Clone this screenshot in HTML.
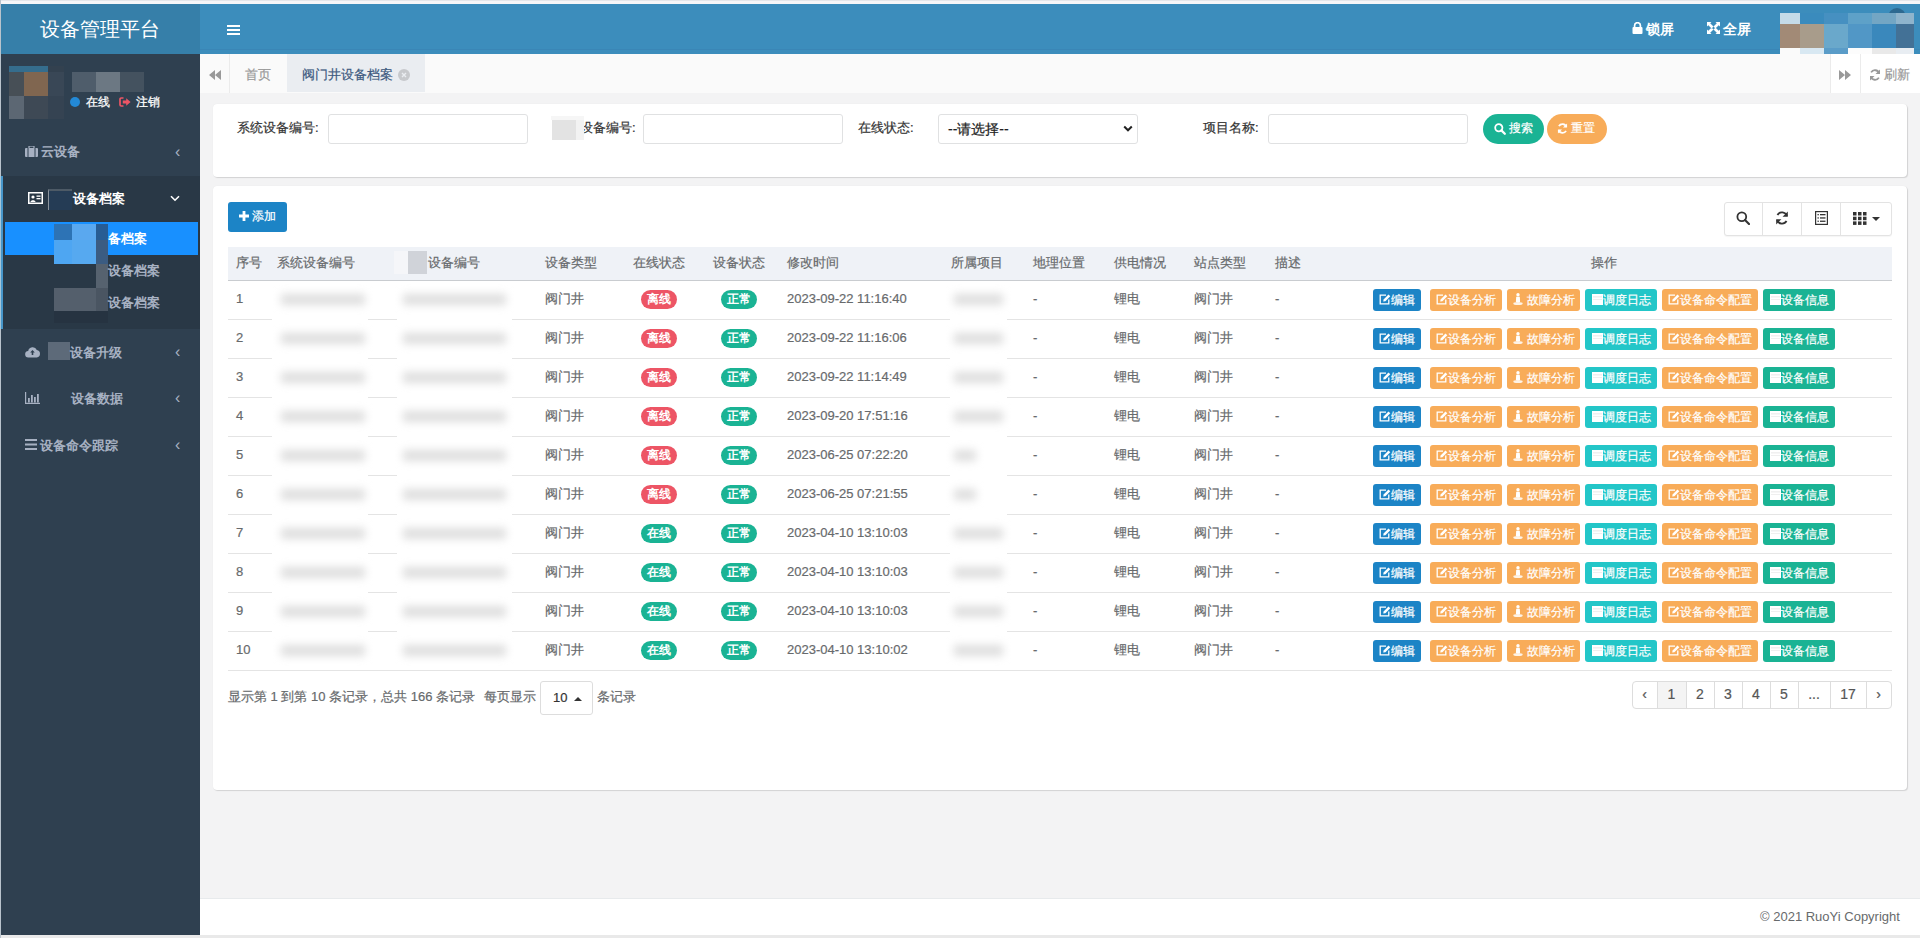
<!DOCTYPE html>
<html><head><meta charset="utf-8">
<style>
*{box-sizing:border-box;margin:0;padding:0}
.td,.th,.lbl,.tbt,.btt,.bt,.pg{-webkit-text-stroke:0.2px currentColor}
html,body{width:1920px;height:938px;overflow:hidden;background:#ececec;font-family:"Liberation Sans",sans-serif;font-size:13px;color:#676a6c}
.abs{position:absolute}
#topstrip{left:0;top:0;width:1920px;height:4px;background:#f6f6f8;border-top:1px solid #e4e6ea}
#logo{left:0;top:4px;width:200px;height:50px;background:#367fa9;color:#fff;font-size:20px;line-height:50px;text-align:center}
#navbar{left:200px;top:4px;width:1720px;height:50px;background:#3c8dbc}
#sidebar{left:0;top:54px;width:200px;height:881px;background:#2f4050}
#leftline{left:0;top:0;width:1px;height:938px;background:#b9c3cc}
#tabs{left:200px;top:54px;width:1720px;height:40px;background:#fafafa;border-bottom:1px solid #dcdcdc}
#main{left:200px;top:93px;width:1720px;height:806px;background:#f3f3f4}
#footer{left:200px;top:898px;width:1720px;height:37px;background:#fff;border-top:1px solid #e7eaec}
#bottomstrip{left:0;top:935px;width:1920px;height:3px;background:#e9e9e9}
.panel{background:#fff;border-radius:4px;box-shadow:1px 1px 1px rgba(0,0,0,.13),0 0 1px rgba(0,0,0,.08)}

.sbm{font-size:13px;font-weight:bold;color:#a7b1c2;line-height:16px;white-space:nowrap}
.sbt{line-height:16px;white-space:nowrap;-webkit-text-stroke:0.25px currentColor}
.chev{font-size:16px;color:#a7b1c2;line-height:16px}

.nvt{font-size:14px;font-weight:bold;color:#fff;line-height:16px;white-space:nowrap}
.tbt{font-size:13px;line-height:16px;white-space:nowrap}

.lbl{font-size:13px;color:#333;line-height:16px;white-space:nowrap}
.inp{background:#fff;border:1px solid #e0e1e2;border-radius:3px}
.btt{font-size:12px;color:#fff;line-height:15px;white-space:nowrap}

.th{font-size:13px;color:#676a6c;line-height:16px;white-space:nowrap}
.td{font-size:13px;color:#676a6c;line-height:16px;white-space:nowrap}
.badge{width:36px;height:19px;border-radius:10px;color:#fff;font-size:12px;font-weight:bold;line-height:19px;text-align:center}
.bt{height:22px;border-radius:3px;color:#fff;font-size:12px;line-height:22px;text-align:center;white-space:nowrap}
.blur{background:#dedede;filter:blur(4px)}
.pg{font-size:14px;color:#555;line-height:16px;text-align:center}
</style></head><body>
<div id="topstrip" class="abs"></div>
<div id="logo" class="abs">设备管理平台</div>
<div id="navbar" class="abs"></div>

<!-- NAVBAR -->
<div class="abs" style="left:200px;top:49px;width:1720px;height:1px;background:#3a86b6"></div>
<div class="abs" style="left:227px;top:25px;width:13px;height:2px;background:#fff"></div>
<div class="abs" style="left:227px;top:29px;width:13px;height:2px;background:#fff"></div>
<div class="abs" style="left:227px;top:33px;width:13px;height:2px;background:#fff"></div>
<svg class="abs" style="left:1632px;top:22px" width="11" height="12" viewBox="0 0 11 12"><path d="M2.6 5V3.6a2.9 2.9 0 0 1 5.8 0V5" fill="none" stroke="#fff" stroke-width="1.7"/><rect x="0.5" y="5" width="10" height="7" rx="1" fill="#fff"/></svg>
<div class="abs nvt" style="left:1646px;top:21px">锁屏</div>
<svg class="abs" style="left:1707px;top:22px" width="13" height="12" viewBox="0 0 13 12"><path d="M0 0h4.5L3.2 1.3 6.5 4.6 4.6 6.5 1.3 3.2 0 4.5zM13 0v4.5L11.7 3.2 8.4 6.5 6.5 4.6 9.8 1.3 8.5 0zM0 12V7.5l1.3 1.3 3.3-3.3 1.9 1.9-3.3 3.3L4.5 12zM13 12H8.5l1.3-1.3-3.3-3.3 1.9-1.9 3.3 3.3L13 7.5z" fill="#fff"/></svg>
<div class="abs nvt" style="left:1723px;top:21px">全屏</div>
<div class="abs" style="left:1888px;top:8px;width:18px;height:10px;border-radius:9px 9px 0 0;background:#2d6990"></div>
<div class="abs" style="left:1780px;top:13px;width:20px;height:11px;background:#c5dbe8"></div>
<div class="abs" style="left:1800px;top:13px;width:24px;height:11px;background:#3a8bbd"></div>
<div class="abs" style="left:1824px;top:13px;width:24px;height:11px;background:#4690c1"></div>
<div class="abs" style="left:1848px;top:13px;width:24px;height:11px;background:#5ea1c8"></div>
<div class="abs" style="left:1872px;top:13px;width:24px;height:11px;background:#73a6c4"></div>
<div class="abs" style="left:1896px;top:13px;width:18px;height:11px;background:#8fb4cc"></div>
<div class="abs" style="left:1780px;top:24px;width:20px;height:24px;background:#a28a76"></div>
<div class="abs" style="left:1800px;top:24px;width:24px;height:24px;background:#a89c8b"></div>
<div class="abs" style="left:1824px;top:24px;width:24px;height:24px;background:#6aa8cb"></div>
<div class="abs" style="left:1848px;top:24px;width:24px;height:24px;background:#5197c6"></div>
<div class="abs" style="left:1872px;top:24px;width:24px;height:24px;background:#3a88bc"></div>
<div class="abs" style="left:1896px;top:24px;width:18px;height:24px;background:#437196"></div>
<div class="abs" style="left:1780px;top:48px;width:20px;height:8px;background:#fafafa"></div>
<div class="abs" style="left:1800px;top:48px;width:24px;height:8px;background:#d8e8f2"></div>
<div class="abs" style="left:1824px;top:48px;width:24px;height:8px;background:#5a9cc8"></div>
<div class="abs" style="left:1848px;top:48px;width:24px;height:8px;background:#fcfcfc"></div>
<div class="abs" style="left:1872px;top:48px;width:24px;height:8px;background:#e9e9e9"></div>
<div class="abs" style="left:1896px;top:48px;width:18px;height:8px;background:#e8edf2"></div>

<div id="sidebar" class="abs"></div>

<!-- SIDEBAR -->
<div class="abs" style="left:9px;top:66px;width:39px;height:6px;background:#356d8d"></div>
<div class="abs" style="left:48px;top:66px;width:16px;height:6px;background:#33414f"></div>
<div class="abs" style="left:9px;top:72px;width:15px;height:24px;background:#474f56"></div>
<div class="abs" style="left:24px;top:72px;width:24px;height:24px;background:#806650"></div>
<div class="abs" style="left:48px;top:72px;width:16px;height:24px;background:#394756"></div>
<div class="abs" style="left:9px;top:96px;width:15px;height:23px;background:#5c6773"></div>
<div class="abs" style="left:24px;top:96px;width:24px;height:23px;background:#3e4955"></div>
<div class="abs" style="left:48px;top:96px;width:16px;height:23px;background:#354352"></div>
<div class="abs" style="left:72px;top:72px;width:24px;height:20px;background:#4f5d6b"></div>
<div class="abs" style="left:96px;top:72px;width:24px;height:20px;background:#6c7883"></div>
<div class="abs" style="left:120px;top:72px;width:24px;height:20px;background:#44525f"></div>
<div class="abs" style="left:70px;top:97px;width:10px;height:10px;border-radius:50%;background:#2389d6"></div>
<div class="abs sbt" style="left:86px;top:94px;color:#fff;font-size:12px">在线</div>
<svg class="abs" style="left:119px;top:97px" width="12" height="10" viewBox="0 0 12 10"><path d="M4.5 1H2.2Q1 1 1 2.2v5.6Q1 9 2.2 9h2.3" fill="none" stroke="#ed5565" stroke-width="1.7"/><path d="M3.8 3.6h3.4V1.2L11.6 5 7.2 8.8V6.4H3.8z" fill="#ed5565"/></svg>
<div class="abs sbt" style="left:136px;top:94px;color:#fff;font-size:12px">注销</div>

<!-- menu item 云设备 -->
<svg class="abs" style="left:25px;top:146px" width="13" height="11" viewBox="0 0 13 11"><rect x="0" y="2" width="13" height="9" rx="1" fill="#a7b1c2"/><rect x="4" y="0" width="5" height="3" fill="none" stroke="#a7b1c2" stroke-width="1.2"/><rect x="2.5" y="2" width="1" height="9" fill="#2f4050"/><rect x="9.5" y="2" width="1" height="9" fill="#2f4050"/></svg>
<div class="abs sbm" style="left:41px;top:144px">云设备</div>
<div class="abs chev" style="left:175px;top:144px">&lsaquo;</div>

<!-- active section -->
<div class="abs" style="left:0;top:176px;width:200px;height:153px;background:#293846"></div>
<div class="abs" style="left:0;top:176px;width:3px;height:153px;background:#4796c9"></div>
<svg class="abs" style="left:28px;top:192px" width="15" height="12" viewBox="0 0 15 12"><rect x="0.75" y="0.75" width="13.5" height="10.5" fill="none" stroke="#fff" stroke-width="1.5"/><circle cx="5" cy="5" r="1.6" fill="#fff"/><path d="M2.5 10c0-2.5 5-2.5 5 0z" fill="#fff"/><rect x="8.5" y="3.5" width="4" height="1.3" fill="#fff"/><rect x="8.5" y="6" width="4" height="1.3" fill="#fff"/></svg>
<div class="abs" style="left:48px;top:189px;width:24px;height:21px;background:#253c55;border-left:1px solid #8a939c;border-top:2px solid #4d5a66"></div>
<div class="abs sbm" style="left:73px;top:191px;color:#fff">设备档案</div>
<svg class="abs" style="left:170px;top:195px" width="10" height="7" viewBox="0 0 10 7"><path d="M1 1.2l4 4 4-4" fill="none" stroke="#fff" stroke-width="1.6"/></svg>

<div class="abs" style="left:5px;top:222px;width:193px;height:33px;background:#1890ff"></div>
<div class="abs" style="left:54px;top:224px;width:18px;height:16px;background:#2d73b5"></div>
<div class="abs" style="left:72px;top:224px;width:24px;height:16px;background:#5aa8ef"></div>
<div class="abs" style="left:96px;top:224px;width:12px;height:16px;background:#275c94"></div>
<div class="abs" style="left:54px;top:240px;width:18px;height:24px;background:#4ea6f2"></div>
<div class="abs" style="left:72px;top:240px;width:24px;height:24px;background:#56a9f0"></div>
<div class="abs" style="left:96px;top:240px;width:12px;height:24px;background:#3b5c82"></div>
<div class="abs" style="left:96px;top:264px;width:12px;height:24px;background:#56626f"></div>
<div class="abs" style="left:54px;top:288px;width:42px;height:23px;background:#545f6c"></div>
<div class="abs" style="left:96px;top:288px;width:12px;height:23px;background:#4a5562"></div>
<div class="abs" style="left:54px;top:311px;width:54px;height:12px;background:#263341"></div>
<div class="abs sbm" style="left:108px;top:231px;color:#fff">备档案</div>
<div class="abs sbm" style="left:108px;top:263px">设备档案</div>
<div class="abs sbm" style="left:108px;top:295px">设备档案</div>

<!-- 设备升级 -->
<svg class="abs" style="left:25px;top:346px" width="15" height="12" viewBox="0 0 15 12"><path d="M3.5 11.5a3.2 3.2 0 0 1-.3-6.4A4.5 4.5 0 0 1 11.8 4a3.8 3.8 0 0 1 0 7.5z" fill="#a7b1c2"/><path d="M7.5 4l-2.3 2.5h1.5V9h1.6V6.5h1.5z" fill="#2f4050"/></svg>
<div class="abs" style="left:48px;top:342px;width:22px;height:18px;background:#5d6a79"></div>
<div class="abs sbm" style="left:70px;top:345px">设备升级</div>
<div class="abs chev" style="left:175px;top:344px">&lsaquo;</div>

<!-- 设备数据 -->
<svg class="abs" style="left:25px;top:392px" width="15" height="12" viewBox="0 0 15 12"><path d="M0.6 0v11.4H15" fill="none" stroke="#a7b1c2" stroke-width="1.2"/><rect x="3" y="6" width="1.8" height="4.5" fill="#a7b1c2"/><rect x="6" y="3" width="1.8" height="7.5" fill="#a7b1c2"/><rect x="9" y="5" width="1.8" height="5.5" fill="#a7b1c2"/><rect x="12" y="2" width="1.8" height="8.5" fill="#a7b1c2"/></svg>
<div class="abs sbm" style="left:71px;top:391px">设备数据</div>
<div class="abs chev" style="left:175px;top:390px">&lsaquo;</div>

<!-- 设备命令跟踪 -->
<svg class="abs" style="left:25px;top:439px" width="12" height="11" viewBox="0 0 12 11"><rect y="0" width="12" height="2" fill="#a7b1c2"/><rect y="4.5" width="12" height="2" fill="#a7b1c2"/><rect y="9" width="12" height="2" fill="#a7b1c2"/></svg>
<div class="abs sbm" style="left:40px;top:438px">设备命令跟踪</div>
<div class="abs chev" style="left:175px;top:437px">&lsaquo;</div>

<div id="tabs" class="abs"></div>
<!-- TABS -->
<div class="abs" style="left:229px;top:54px;width:1px;height:39px;background:#ebebeb"></div>
<svg class="abs" style="left:209px;top:70px" width="12" height="10" viewBox="0 0 12 10"><path d="M6 0v10L0 5zM12 0v10L6 5z" fill="#999"/></svg>
<div class="abs tbt" style="left:245px;top:67px;color:#999">首页</div>
<div class="abs" style="left:287px;top:54px;width:138px;height:38px;background:#eaedf1"></div>
<div class="abs tbt" style="left:302px;top:67px;color:#3d5a80">阀门井设备档案</div>
<div class="abs" style="left:398px;top:69px;width:12px;height:12px;border-radius:50%;background:#c7c9cc"></div>
<svg class="abs" style="left:398px;top:69px" width="12" height="12" viewBox="0 0 12 12"><path d="M4 4l4 4M8 4l-4 4" stroke="#eaedf1" stroke-width="1.4"/></svg>
<div class="abs" style="left:1830px;top:54px;width:1px;height:39px;background:#ebebeb"></div>
<div class="abs" style="left:1860px;top:54px;width:1px;height:39px;background:#ebebeb"></div>
<div class="abs" style="left:1831px;top:54px;width:29px;height:39px;background:#fff"></div>
<div class="abs" style="left:1861px;top:54px;width:59px;height:39px;background:#fff"></div>
<svg class="abs" style="left:1839px;top:70px" width="12" height="10" viewBox="0 0 12 10"><path d="M0 0v10L6 5zM6 0v10L12 5z" fill="#999"/></svg>
<svg class="abs" style="left:1869px;top:69px" width="12" height="12" viewBox="0 0 12 12"><path d="M10.2 4.2A4.5 4.5 0 0 0 2.1 3.4" fill="none" stroke="#999" stroke-width="1.8"/><path d="M11 0.5v4.5H6.5z" fill="#999"/><path d="M1.8 7.8a4.5 4.5 0 0 0 8.1.8" fill="none" stroke="#999" stroke-width="1.8"/><path d="M1 11.5V7h4.5z" fill="#999"/></svg>
<div class="abs tbt" style="left:1884px;top:67px;color:#999">刷新</div>

<div id="main" class="abs"></div>
<div id="footer" class="abs"></div>
<div id="bottomstrip" class="abs"></div>
<div id="leftline" class="abs"></div>
<div class="abs" style="left:0;top:176px;width:1px;height:153px;background:#a5c5d8"></div>
<div class="abs panel" style="left:213px;top:104px;width:1694px;height:73px"></div>
<div class="abs panel" style="left:213px;top:186px;width:1694px;height:604px"></div>

<!-- SEARCH FORM -->
<div class="abs lbl" style="left:237px;top:120px">系统设备编号:</div>
<div class="abs inp" style="left:328px;top:114px;width:200px;height:30px"></div>
<div class="abs lbl" style="left:580px;top:120px">设备编号:</div>
<div class="abs" style="left:551px;top:116px;width:33px;height:4px;background:#f6f6f6"></div>
<div class="abs" style="left:552px;top:120px;width:24px;height:20px;background:#e3e3e3"></div>
<div class="abs" style="left:576px;top:120px;width:8px;height:20px;background:#f2f2f2"></div>
<div class="abs inp" style="left:643px;top:114px;width:200px;height:30px"></div>
<div class="abs lbl" style="left:858px;top:120px">在线状态:</div>
<div class="abs inp" style="left:938px;top:114px;width:200px;height:30px"></div>
<div class="abs lbl" style="left:948px;top:121px;color:#222;font-size:14px">--请选择--</div>
<svg class="abs" style="left:1123px;top:125px" width="10" height="8" viewBox="0 0 10 8"><path d="M1.2 1.5l3.8 3.8 3.8-3.8" fill="none" stroke="#222" stroke-width="2"/></svg>
<div class="abs lbl" style="left:1203px;top:120px">项目名称:</div>
<div class="abs inp" style="left:1268px;top:114px;width:200px;height:30px"></div>
<div class="abs" style="left:1483px;top:114px;width:61px;height:30px;border-radius:15px;background:#1ab394"></div>
<svg class="abs" style="left:1494px;top:123px" width="12" height="12" viewBox="0 0 12 12"><circle cx="4.8" cy="4.8" r="3.6" fill="none" stroke="#fff" stroke-width="1.8"/><path d="M7.4 7.4l3.4 3.4" stroke="#fff" stroke-width="2.2" stroke-linecap="round"/></svg>
<div class="abs btt" style="left:1509px;top:121px">搜索</div>
<div class="abs" style="left:1547px;top:114px;width:60px;height:30px;border-radius:15px;background:#f8ac59"></div>
<svg class="abs" style="left:1557px;top:123px" width="11" height="11" viewBox="0 0 12 12"><path d="M10.2 4.2A4.5 4.5 0 0 0 2.1 3.4" fill="none" stroke="#fff" stroke-width="2"/><path d="M11 0.5v4.5H6.5z" fill="#fff"/><path d="M1.8 7.8a4.5 4.5 0 0 0 8.1.8" fill="none" stroke="#fff" stroke-width="2"/><path d="M1 11.5V7h4.5z" fill="#fff"/></svg>
<div class="abs btt" style="left:1571px;top:121px">重置</div>

<!-- TABLE -->
<div class="abs" style="left:228px;top:202px;width:59px;height:30px;border-radius:3px;background:#1c84c6"></div>
<svg class="abs" style="left:239px;top:211px" width="10" height="10" viewBox="0 0 10 10"><path d="M3.6 0h2.8v3.6H10v2.8H6.4V10H3.6V6.4H0V3.6h3.6z" fill="#fff"/></svg>
<div class="abs btt" style="left:252px;top:209px">添加</div>
<div class="abs" style="left:1724px;top:202px;width:168px;height:34px;border:1px solid #e3e3e3;border-radius:3px;background:#fff;box-shadow:0 1px 1px rgba(0,0,0,.04)"></div>
<div class="abs" style="left:1762px;top:203px;width:1px;height:32px;background:#e3e3e3"></div>
<div class="abs" style="left:1801px;top:203px;width:1px;height:32px;background:#e3e3e3"></div>
<div class="abs" style="left:1840px;top:203px;width:1px;height:32px;background:#e3e3e3"></div>
<svg class="abs" style="left:1736px;top:211px" width="14" height="14" viewBox="0 0 14 14"><circle cx="5.8" cy="5.8" r="4.4" fill="none" stroke="#333" stroke-width="1.8"/><path d="M9 9l4 4" stroke="#333" stroke-width="2.2" stroke-linecap="round"/></svg>
<svg class="abs" style="left:1775px;top:211px" width="14" height="14" viewBox="0 0 12 12"><path d="M10.2 4.2A4.5 4.5 0 0 0 2.1 3.4" fill="none" stroke="#333" stroke-width="1.6"/><path d="M11 0.5v4.5H6.5z" fill="#333"/><path d="M1.8 7.8a4.5 4.5 0 0 0 8.1.8" fill="none" stroke="#333" stroke-width="1.6"/><path d="M1 11.5V7h4.5z" fill="#333"/></svg>
<svg class="abs" style="left:1815px;top:211px" width="13" height="14" viewBox="0 0 13 14"><rect x="0.6" y="0.6" width="11.8" height="12.8" fill="none" stroke="#333" stroke-width="1.2"/><rect x="2.5" y="3" width="1.3" height="1.3" fill="#333"/><rect x="5" y="3" width="5.5" height="1.3" fill="#333"/><rect x="2.5" y="6.3" width="1.3" height="1.3" fill="#333"/><rect x="5" y="6.3" width="5.5" height="1.3" fill="#333"/><rect x="2.5" y="9.6" width="1.3" height="1.3" fill="#333"/><rect x="5" y="9.6" width="5.5" height="1.3" fill="#333"/></svg>
<svg class="abs" style="left:1853px;top:212px" width="27" height="13" viewBox="0 0 27 13"><g fill="#333"><rect x="0" y="0" width="3.5" height="3.5"/><rect x="5" y="0" width="3.5" height="3.5"/><rect x="10" y="0" width="3.5" height="3.5"/><rect x="0" y="4.7" width="3.5" height="3.5"/><rect x="5" y="4.7" width="3.5" height="3.5"/><rect x="10" y="4.7" width="3.5" height="3.5"/><rect x="0" y="9.4" width="3.5" height="3.5"/><rect x="5" y="9.4" width="3.5" height="3.5"/><rect x="10" y="9.4" width="3.5" height="3.5"/><path d="M19 5h8l-4 4z"/></g></svg>
<div class="abs" style="left:228px;top:247px;width:1664px;height:33px;background:#eff2f7"></div>
<div class="abs" style="left:228px;top:280px;width:1664px;height:1px;background:#c9ccd0"></div>
<div class="abs th" style="left:236px;top:255px">序号</div>
<div class="abs th" style="left:277px;top:255px">系统设备编号</div>
<div class="abs th" style="left:428px;top:255px">设备编号</div>
<div class="abs th" style="left:545px;top:255px">设备类型</div>
<div class="abs th" style="left:633px;top:255px">在线状态</div>
<div class="abs th" style="left:713px;top:255px">设备状态</div>
<div class="abs th" style="left:787px;top:255px">修改时间</div>
<div class="abs th" style="left:951px;top:255px">所属项目</div>
<div class="abs th" style="left:1033px;top:255px">地理位置</div>
<div class="abs th" style="left:1114px;top:255px">供电情况</div>
<div class="abs th" style="left:1194px;top:255px">站点类型</div>
<div class="abs th" style="left:1275px;top:255px">描述</div>
<div class="abs th" style="left:1591px;top:255px">操作</div>
<div class="abs" style="left:394px;top:251px;width:14px;height:23px;background:#f5f6f9"></div>
<div class="abs" style="left:408px;top:251px;width:19px;height:23px;background:#d0d3d9"></div>
<div class="abs" style="left:228px;top:319px;width:1664px;height:1px;background:#e4e4e4"></div>
<div class="abs td" style="left:236px;top:291px">1</div>
<div class="abs td" style="left:545px;top:291px">阀门井</div>
<div class="abs badge" style="left:641px;top:290px;background:#ed5565">离线</div>
<div class="abs badge" style="left:721px;top:290px;background:#1ab394">正常</div>
<div class="abs td" style="left:787px;top:291px">2023-09-22 11:16:40</div>
<div class="abs td" style="left:1033px;top:291px">-</div>
<div class="abs td" style="left:1114px;top:291px">锂电</div>
<div class="abs td" style="left:1194px;top:291px">阀门井</div>
<div class="abs td" style="left:1275px;top:291px">-</div>
<div class="abs bt" style="left:1373px;top:289px;width:48px;background:#1c84c6"><svg width="12" height="11" viewBox="0 0 12 11" style="vertical-align:-1px"><path d="M7 1.2H1.2v8.6h8.6V5.5" fill="none" stroke="#fff" stroke-width="1.3"/><path d="M4.2 7.6l.4-2.2L9.5.5l1.8 1.8-4.9 4.9z" fill="#fff"/></svg>编辑</div>
<div class="abs bt" style="left:1430px;top:289px;width:72px;background:#f8ac59"><svg width="12" height="11" viewBox="0 0 12 11" style="vertical-align:-1px"><path d="M7 1.2H1.2v8.6h8.6V5.5" fill="none" stroke="#fff" stroke-width="1.3"/><path d="M4.2 7.6l.4-2.2L9.5.5l1.8 1.8-4.9 4.9z" fill="#fff"/></svg>设备分析</div>
<div class="abs bt" style="left:1507px;top:289px;width:73px;background:#f8ac59"><svg width="10" height="12" viewBox="0 0 10 12" style="vertical-align:-1px;margin-right:4px"><circle cx="5" cy="1.8" r="1.7" fill="#fff"/><path d="M3.2 3.8h3.6l.3 5.5H2.9z" fill="#fff"/><ellipse cx="5" cy="10.4" rx="4.7" ry="1.5" fill="#fff" opacity=".85"/></svg>故障分析</div>
<div class="abs bt" style="left:1585px;top:289px;width:72px;background:#23c6c8"><svg width="11" height="11" viewBox="0 0 11 11" style="vertical-align:-1px"><rect width="11" height="11" fill="#fff"/><rect x="1" y="2.5" width="9" height=".8" fill="rgba(0,0,0,.12)"/><rect x="1" y="5" width="9" height=".8" fill="rgba(0,0,0,.08)"/></svg>调度日志</div>
<div class="abs bt" style="left:1662px;top:289px;width:96px;background:#f8ac59"><svg width="12" height="11" viewBox="0 0 12 11" style="vertical-align:-1px"><path d="M7 1.2H1.2v8.6h8.6V5.5" fill="none" stroke="#fff" stroke-width="1.3"/><path d="M4.2 7.6l.4-2.2L9.5.5l1.8 1.8-4.9 4.9z" fill="#fff"/></svg>设备命令配置</div>
<div class="abs bt" style="left:1763px;top:289px;width:72px;background:#1ab394"><svg width="11" height="11" viewBox="0 0 11 11" style="vertical-align:-1px"><rect width="11" height="11" fill="#fff"/><rect x="1" y="2.5" width="9" height=".8" fill="rgba(0,0,0,.12)"/><rect x="1" y="5" width="9" height=".8" fill="rgba(0,0,0,.08)"/></svg>设备信息</div>
<div class="abs" style="left:228px;top:358px;width:1664px;height:1px;background:#e4e4e4"></div>
<div class="abs td" style="left:236px;top:330px">2</div>
<div class="abs td" style="left:545px;top:330px">阀门井</div>
<div class="abs badge" style="left:641px;top:329px;background:#ed5565">离线</div>
<div class="abs badge" style="left:721px;top:329px;background:#1ab394">正常</div>
<div class="abs td" style="left:787px;top:330px">2023-09-22 11:16:06</div>
<div class="abs td" style="left:1033px;top:330px">-</div>
<div class="abs td" style="left:1114px;top:330px">锂电</div>
<div class="abs td" style="left:1194px;top:330px">阀门井</div>
<div class="abs td" style="left:1275px;top:330px">-</div>
<div class="abs bt" style="left:1373px;top:328px;width:48px;background:#1c84c6"><svg width="12" height="11" viewBox="0 0 12 11" style="vertical-align:-1px"><path d="M7 1.2H1.2v8.6h8.6V5.5" fill="none" stroke="#fff" stroke-width="1.3"/><path d="M4.2 7.6l.4-2.2L9.5.5l1.8 1.8-4.9 4.9z" fill="#fff"/></svg>编辑</div>
<div class="abs bt" style="left:1430px;top:328px;width:72px;background:#f8ac59"><svg width="12" height="11" viewBox="0 0 12 11" style="vertical-align:-1px"><path d="M7 1.2H1.2v8.6h8.6V5.5" fill="none" stroke="#fff" stroke-width="1.3"/><path d="M4.2 7.6l.4-2.2L9.5.5l1.8 1.8-4.9 4.9z" fill="#fff"/></svg>设备分析</div>
<div class="abs bt" style="left:1507px;top:328px;width:73px;background:#f8ac59"><svg width="10" height="12" viewBox="0 0 10 12" style="vertical-align:-1px;margin-right:4px"><circle cx="5" cy="1.8" r="1.7" fill="#fff"/><path d="M3.2 3.8h3.6l.3 5.5H2.9z" fill="#fff"/><ellipse cx="5" cy="10.4" rx="4.7" ry="1.5" fill="#fff" opacity=".85"/></svg>故障分析</div>
<div class="abs bt" style="left:1585px;top:328px;width:72px;background:#23c6c8"><svg width="11" height="11" viewBox="0 0 11 11" style="vertical-align:-1px"><rect width="11" height="11" fill="#fff"/><rect x="1" y="2.5" width="9" height=".8" fill="rgba(0,0,0,.12)"/><rect x="1" y="5" width="9" height=".8" fill="rgba(0,0,0,.08)"/></svg>调度日志</div>
<div class="abs bt" style="left:1662px;top:328px;width:96px;background:#f8ac59"><svg width="12" height="11" viewBox="0 0 12 11" style="vertical-align:-1px"><path d="M7 1.2H1.2v8.6h8.6V5.5" fill="none" stroke="#fff" stroke-width="1.3"/><path d="M4.2 7.6l.4-2.2L9.5.5l1.8 1.8-4.9 4.9z" fill="#fff"/></svg>设备命令配置</div>
<div class="abs bt" style="left:1763px;top:328px;width:72px;background:#1ab394"><svg width="11" height="11" viewBox="0 0 11 11" style="vertical-align:-1px"><rect width="11" height="11" fill="#fff"/><rect x="1" y="2.5" width="9" height=".8" fill="rgba(0,0,0,.12)"/><rect x="1" y="5" width="9" height=".8" fill="rgba(0,0,0,.08)"/></svg>设备信息</div>
<div class="abs" style="left:228px;top:397px;width:1664px;height:1px;background:#e4e4e4"></div>
<div class="abs td" style="left:236px;top:369px">3</div>
<div class="abs td" style="left:545px;top:369px">阀门井</div>
<div class="abs badge" style="left:641px;top:368px;background:#ed5565">离线</div>
<div class="abs badge" style="left:721px;top:368px;background:#1ab394">正常</div>
<div class="abs td" style="left:787px;top:369px">2023-09-22 11:14:49</div>
<div class="abs td" style="left:1033px;top:369px">-</div>
<div class="abs td" style="left:1114px;top:369px">锂电</div>
<div class="abs td" style="left:1194px;top:369px">阀门井</div>
<div class="abs td" style="left:1275px;top:369px">-</div>
<div class="abs bt" style="left:1373px;top:367px;width:48px;background:#1c84c6"><svg width="12" height="11" viewBox="0 0 12 11" style="vertical-align:-1px"><path d="M7 1.2H1.2v8.6h8.6V5.5" fill="none" stroke="#fff" stroke-width="1.3"/><path d="M4.2 7.6l.4-2.2L9.5.5l1.8 1.8-4.9 4.9z" fill="#fff"/></svg>编辑</div>
<div class="abs bt" style="left:1430px;top:367px;width:72px;background:#f8ac59"><svg width="12" height="11" viewBox="0 0 12 11" style="vertical-align:-1px"><path d="M7 1.2H1.2v8.6h8.6V5.5" fill="none" stroke="#fff" stroke-width="1.3"/><path d="M4.2 7.6l.4-2.2L9.5.5l1.8 1.8-4.9 4.9z" fill="#fff"/></svg>设备分析</div>
<div class="abs bt" style="left:1507px;top:367px;width:73px;background:#f8ac59"><svg width="10" height="12" viewBox="0 0 10 12" style="vertical-align:-1px;margin-right:4px"><circle cx="5" cy="1.8" r="1.7" fill="#fff"/><path d="M3.2 3.8h3.6l.3 5.5H2.9z" fill="#fff"/><ellipse cx="5" cy="10.4" rx="4.7" ry="1.5" fill="#fff" opacity=".85"/></svg>故障分析</div>
<div class="abs bt" style="left:1585px;top:367px;width:72px;background:#23c6c8"><svg width="11" height="11" viewBox="0 0 11 11" style="vertical-align:-1px"><rect width="11" height="11" fill="#fff"/><rect x="1" y="2.5" width="9" height=".8" fill="rgba(0,0,0,.12)"/><rect x="1" y="5" width="9" height=".8" fill="rgba(0,0,0,.08)"/></svg>调度日志</div>
<div class="abs bt" style="left:1662px;top:367px;width:96px;background:#f8ac59"><svg width="12" height="11" viewBox="0 0 12 11" style="vertical-align:-1px"><path d="M7 1.2H1.2v8.6h8.6V5.5" fill="none" stroke="#fff" stroke-width="1.3"/><path d="M4.2 7.6l.4-2.2L9.5.5l1.8 1.8-4.9 4.9z" fill="#fff"/></svg>设备命令配置</div>
<div class="abs bt" style="left:1763px;top:367px;width:72px;background:#1ab394"><svg width="11" height="11" viewBox="0 0 11 11" style="vertical-align:-1px"><rect width="11" height="11" fill="#fff"/><rect x="1" y="2.5" width="9" height=".8" fill="rgba(0,0,0,.12)"/><rect x="1" y="5" width="9" height=".8" fill="rgba(0,0,0,.08)"/></svg>设备信息</div>
<div class="abs" style="left:228px;top:436px;width:1664px;height:1px;background:#e4e4e4"></div>
<div class="abs td" style="left:236px;top:408px">4</div>
<div class="abs td" style="left:545px;top:408px">阀门井</div>
<div class="abs badge" style="left:641px;top:407px;background:#ed5565">离线</div>
<div class="abs badge" style="left:721px;top:407px;background:#1ab394">正常</div>
<div class="abs td" style="left:787px;top:408px">2023-09-20 17:51:16</div>
<div class="abs td" style="left:1033px;top:408px">-</div>
<div class="abs td" style="left:1114px;top:408px">锂电</div>
<div class="abs td" style="left:1194px;top:408px">阀门井</div>
<div class="abs td" style="left:1275px;top:408px">-</div>
<div class="abs bt" style="left:1373px;top:406px;width:48px;background:#1c84c6"><svg width="12" height="11" viewBox="0 0 12 11" style="vertical-align:-1px"><path d="M7 1.2H1.2v8.6h8.6V5.5" fill="none" stroke="#fff" stroke-width="1.3"/><path d="M4.2 7.6l.4-2.2L9.5.5l1.8 1.8-4.9 4.9z" fill="#fff"/></svg>编辑</div>
<div class="abs bt" style="left:1430px;top:406px;width:72px;background:#f8ac59"><svg width="12" height="11" viewBox="0 0 12 11" style="vertical-align:-1px"><path d="M7 1.2H1.2v8.6h8.6V5.5" fill="none" stroke="#fff" stroke-width="1.3"/><path d="M4.2 7.6l.4-2.2L9.5.5l1.8 1.8-4.9 4.9z" fill="#fff"/></svg>设备分析</div>
<div class="abs bt" style="left:1507px;top:406px;width:73px;background:#f8ac59"><svg width="10" height="12" viewBox="0 0 10 12" style="vertical-align:-1px;margin-right:4px"><circle cx="5" cy="1.8" r="1.7" fill="#fff"/><path d="M3.2 3.8h3.6l.3 5.5H2.9z" fill="#fff"/><ellipse cx="5" cy="10.4" rx="4.7" ry="1.5" fill="#fff" opacity=".85"/></svg>故障分析</div>
<div class="abs bt" style="left:1585px;top:406px;width:72px;background:#23c6c8"><svg width="11" height="11" viewBox="0 0 11 11" style="vertical-align:-1px"><rect width="11" height="11" fill="#fff"/><rect x="1" y="2.5" width="9" height=".8" fill="rgba(0,0,0,.12)"/><rect x="1" y="5" width="9" height=".8" fill="rgba(0,0,0,.08)"/></svg>调度日志</div>
<div class="abs bt" style="left:1662px;top:406px;width:96px;background:#f8ac59"><svg width="12" height="11" viewBox="0 0 12 11" style="vertical-align:-1px"><path d="M7 1.2H1.2v8.6h8.6V5.5" fill="none" stroke="#fff" stroke-width="1.3"/><path d="M4.2 7.6l.4-2.2L9.5.5l1.8 1.8-4.9 4.9z" fill="#fff"/></svg>设备命令配置</div>
<div class="abs bt" style="left:1763px;top:406px;width:72px;background:#1ab394"><svg width="11" height="11" viewBox="0 0 11 11" style="vertical-align:-1px"><rect width="11" height="11" fill="#fff"/><rect x="1" y="2.5" width="9" height=".8" fill="rgba(0,0,0,.12)"/><rect x="1" y="5" width="9" height=".8" fill="rgba(0,0,0,.08)"/></svg>设备信息</div>
<div class="abs" style="left:228px;top:475px;width:1664px;height:1px;background:#e4e4e4"></div>
<div class="abs td" style="left:236px;top:447px">5</div>
<div class="abs td" style="left:545px;top:447px">阀门井</div>
<div class="abs badge" style="left:641px;top:446px;background:#ed5565">离线</div>
<div class="abs badge" style="left:721px;top:446px;background:#1ab394">正常</div>
<div class="abs td" style="left:787px;top:447px">2023-06-25 07:22:20</div>
<div class="abs td" style="left:1033px;top:447px">-</div>
<div class="abs td" style="left:1114px;top:447px">锂电</div>
<div class="abs td" style="left:1194px;top:447px">阀门井</div>
<div class="abs td" style="left:1275px;top:447px">-</div>
<div class="abs bt" style="left:1373px;top:445px;width:48px;background:#1c84c6"><svg width="12" height="11" viewBox="0 0 12 11" style="vertical-align:-1px"><path d="M7 1.2H1.2v8.6h8.6V5.5" fill="none" stroke="#fff" stroke-width="1.3"/><path d="M4.2 7.6l.4-2.2L9.5.5l1.8 1.8-4.9 4.9z" fill="#fff"/></svg>编辑</div>
<div class="abs bt" style="left:1430px;top:445px;width:72px;background:#f8ac59"><svg width="12" height="11" viewBox="0 0 12 11" style="vertical-align:-1px"><path d="M7 1.2H1.2v8.6h8.6V5.5" fill="none" stroke="#fff" stroke-width="1.3"/><path d="M4.2 7.6l.4-2.2L9.5.5l1.8 1.8-4.9 4.9z" fill="#fff"/></svg>设备分析</div>
<div class="abs bt" style="left:1507px;top:445px;width:73px;background:#f8ac59"><svg width="10" height="12" viewBox="0 0 10 12" style="vertical-align:-1px;margin-right:4px"><circle cx="5" cy="1.8" r="1.7" fill="#fff"/><path d="M3.2 3.8h3.6l.3 5.5H2.9z" fill="#fff"/><ellipse cx="5" cy="10.4" rx="4.7" ry="1.5" fill="#fff" opacity=".85"/></svg>故障分析</div>
<div class="abs bt" style="left:1585px;top:445px;width:72px;background:#23c6c8"><svg width="11" height="11" viewBox="0 0 11 11" style="vertical-align:-1px"><rect width="11" height="11" fill="#fff"/><rect x="1" y="2.5" width="9" height=".8" fill="rgba(0,0,0,.12)"/><rect x="1" y="5" width="9" height=".8" fill="rgba(0,0,0,.08)"/></svg>调度日志</div>
<div class="abs bt" style="left:1662px;top:445px;width:96px;background:#f8ac59"><svg width="12" height="11" viewBox="0 0 12 11" style="vertical-align:-1px"><path d="M7 1.2H1.2v8.6h8.6V5.5" fill="none" stroke="#fff" stroke-width="1.3"/><path d="M4.2 7.6l.4-2.2L9.5.5l1.8 1.8-4.9 4.9z" fill="#fff"/></svg>设备命令配置</div>
<div class="abs bt" style="left:1763px;top:445px;width:72px;background:#1ab394"><svg width="11" height="11" viewBox="0 0 11 11" style="vertical-align:-1px"><rect width="11" height="11" fill="#fff"/><rect x="1" y="2.5" width="9" height=".8" fill="rgba(0,0,0,.12)"/><rect x="1" y="5" width="9" height=".8" fill="rgba(0,0,0,.08)"/></svg>设备信息</div>
<div class="abs" style="left:228px;top:514px;width:1664px;height:1px;background:#e4e4e4"></div>
<div class="abs td" style="left:236px;top:486px">6</div>
<div class="abs td" style="left:545px;top:486px">阀门井</div>
<div class="abs badge" style="left:641px;top:485px;background:#ed5565">离线</div>
<div class="abs badge" style="left:721px;top:485px;background:#1ab394">正常</div>
<div class="abs td" style="left:787px;top:486px">2023-06-25 07:21:55</div>
<div class="abs td" style="left:1033px;top:486px">-</div>
<div class="abs td" style="left:1114px;top:486px">锂电</div>
<div class="abs td" style="left:1194px;top:486px">阀门井</div>
<div class="abs td" style="left:1275px;top:486px">-</div>
<div class="abs bt" style="left:1373px;top:484px;width:48px;background:#1c84c6"><svg width="12" height="11" viewBox="0 0 12 11" style="vertical-align:-1px"><path d="M7 1.2H1.2v8.6h8.6V5.5" fill="none" stroke="#fff" stroke-width="1.3"/><path d="M4.2 7.6l.4-2.2L9.5.5l1.8 1.8-4.9 4.9z" fill="#fff"/></svg>编辑</div>
<div class="abs bt" style="left:1430px;top:484px;width:72px;background:#f8ac59"><svg width="12" height="11" viewBox="0 0 12 11" style="vertical-align:-1px"><path d="M7 1.2H1.2v8.6h8.6V5.5" fill="none" stroke="#fff" stroke-width="1.3"/><path d="M4.2 7.6l.4-2.2L9.5.5l1.8 1.8-4.9 4.9z" fill="#fff"/></svg>设备分析</div>
<div class="abs bt" style="left:1507px;top:484px;width:73px;background:#f8ac59"><svg width="10" height="12" viewBox="0 0 10 12" style="vertical-align:-1px;margin-right:4px"><circle cx="5" cy="1.8" r="1.7" fill="#fff"/><path d="M3.2 3.8h3.6l.3 5.5H2.9z" fill="#fff"/><ellipse cx="5" cy="10.4" rx="4.7" ry="1.5" fill="#fff" opacity=".85"/></svg>故障分析</div>
<div class="abs bt" style="left:1585px;top:484px;width:72px;background:#23c6c8"><svg width="11" height="11" viewBox="0 0 11 11" style="vertical-align:-1px"><rect width="11" height="11" fill="#fff"/><rect x="1" y="2.5" width="9" height=".8" fill="rgba(0,0,0,.12)"/><rect x="1" y="5" width="9" height=".8" fill="rgba(0,0,0,.08)"/></svg>调度日志</div>
<div class="abs bt" style="left:1662px;top:484px;width:96px;background:#f8ac59"><svg width="12" height="11" viewBox="0 0 12 11" style="vertical-align:-1px"><path d="M7 1.2H1.2v8.6h8.6V5.5" fill="none" stroke="#fff" stroke-width="1.3"/><path d="M4.2 7.6l.4-2.2L9.5.5l1.8 1.8-4.9 4.9z" fill="#fff"/></svg>设备命令配置</div>
<div class="abs bt" style="left:1763px;top:484px;width:72px;background:#1ab394"><svg width="11" height="11" viewBox="0 0 11 11" style="vertical-align:-1px"><rect width="11" height="11" fill="#fff"/><rect x="1" y="2.5" width="9" height=".8" fill="rgba(0,0,0,.12)"/><rect x="1" y="5" width="9" height=".8" fill="rgba(0,0,0,.08)"/></svg>设备信息</div>
<div class="abs" style="left:228px;top:553px;width:1664px;height:1px;background:#e4e4e4"></div>
<div class="abs td" style="left:236px;top:525px">7</div>
<div class="abs td" style="left:545px;top:525px">阀门井</div>
<div class="abs badge" style="left:641px;top:524px;background:#1ab394">在线</div>
<div class="abs badge" style="left:721px;top:524px;background:#1ab394">正常</div>
<div class="abs td" style="left:787px;top:525px">2023-04-10 13:10:03</div>
<div class="abs td" style="left:1033px;top:525px">-</div>
<div class="abs td" style="left:1114px;top:525px">锂电</div>
<div class="abs td" style="left:1194px;top:525px">阀门井</div>
<div class="abs td" style="left:1275px;top:525px">-</div>
<div class="abs bt" style="left:1373px;top:523px;width:48px;background:#1c84c6"><svg width="12" height="11" viewBox="0 0 12 11" style="vertical-align:-1px"><path d="M7 1.2H1.2v8.6h8.6V5.5" fill="none" stroke="#fff" stroke-width="1.3"/><path d="M4.2 7.6l.4-2.2L9.5.5l1.8 1.8-4.9 4.9z" fill="#fff"/></svg>编辑</div>
<div class="abs bt" style="left:1430px;top:523px;width:72px;background:#f8ac59"><svg width="12" height="11" viewBox="0 0 12 11" style="vertical-align:-1px"><path d="M7 1.2H1.2v8.6h8.6V5.5" fill="none" stroke="#fff" stroke-width="1.3"/><path d="M4.2 7.6l.4-2.2L9.5.5l1.8 1.8-4.9 4.9z" fill="#fff"/></svg>设备分析</div>
<div class="abs bt" style="left:1507px;top:523px;width:73px;background:#f8ac59"><svg width="10" height="12" viewBox="0 0 10 12" style="vertical-align:-1px;margin-right:4px"><circle cx="5" cy="1.8" r="1.7" fill="#fff"/><path d="M3.2 3.8h3.6l.3 5.5H2.9z" fill="#fff"/><ellipse cx="5" cy="10.4" rx="4.7" ry="1.5" fill="#fff" opacity=".85"/></svg>故障分析</div>
<div class="abs bt" style="left:1585px;top:523px;width:72px;background:#23c6c8"><svg width="11" height="11" viewBox="0 0 11 11" style="vertical-align:-1px"><rect width="11" height="11" fill="#fff"/><rect x="1" y="2.5" width="9" height=".8" fill="rgba(0,0,0,.12)"/><rect x="1" y="5" width="9" height=".8" fill="rgba(0,0,0,.08)"/></svg>调度日志</div>
<div class="abs bt" style="left:1662px;top:523px;width:96px;background:#f8ac59"><svg width="12" height="11" viewBox="0 0 12 11" style="vertical-align:-1px"><path d="M7 1.2H1.2v8.6h8.6V5.5" fill="none" stroke="#fff" stroke-width="1.3"/><path d="M4.2 7.6l.4-2.2L9.5.5l1.8 1.8-4.9 4.9z" fill="#fff"/></svg>设备命令配置</div>
<div class="abs bt" style="left:1763px;top:523px;width:72px;background:#1ab394"><svg width="11" height="11" viewBox="0 0 11 11" style="vertical-align:-1px"><rect width="11" height="11" fill="#fff"/><rect x="1" y="2.5" width="9" height=".8" fill="rgba(0,0,0,.12)"/><rect x="1" y="5" width="9" height=".8" fill="rgba(0,0,0,.08)"/></svg>设备信息</div>
<div class="abs" style="left:228px;top:592px;width:1664px;height:1px;background:#e4e4e4"></div>
<div class="abs td" style="left:236px;top:564px">8</div>
<div class="abs td" style="left:545px;top:564px">阀门井</div>
<div class="abs badge" style="left:641px;top:563px;background:#1ab394">在线</div>
<div class="abs badge" style="left:721px;top:563px;background:#1ab394">正常</div>
<div class="abs td" style="left:787px;top:564px">2023-04-10 13:10:03</div>
<div class="abs td" style="left:1033px;top:564px">-</div>
<div class="abs td" style="left:1114px;top:564px">锂电</div>
<div class="abs td" style="left:1194px;top:564px">阀门井</div>
<div class="abs td" style="left:1275px;top:564px">-</div>
<div class="abs bt" style="left:1373px;top:562px;width:48px;background:#1c84c6"><svg width="12" height="11" viewBox="0 0 12 11" style="vertical-align:-1px"><path d="M7 1.2H1.2v8.6h8.6V5.5" fill="none" stroke="#fff" stroke-width="1.3"/><path d="M4.2 7.6l.4-2.2L9.5.5l1.8 1.8-4.9 4.9z" fill="#fff"/></svg>编辑</div>
<div class="abs bt" style="left:1430px;top:562px;width:72px;background:#f8ac59"><svg width="12" height="11" viewBox="0 0 12 11" style="vertical-align:-1px"><path d="M7 1.2H1.2v8.6h8.6V5.5" fill="none" stroke="#fff" stroke-width="1.3"/><path d="M4.2 7.6l.4-2.2L9.5.5l1.8 1.8-4.9 4.9z" fill="#fff"/></svg>设备分析</div>
<div class="abs bt" style="left:1507px;top:562px;width:73px;background:#f8ac59"><svg width="10" height="12" viewBox="0 0 10 12" style="vertical-align:-1px;margin-right:4px"><circle cx="5" cy="1.8" r="1.7" fill="#fff"/><path d="M3.2 3.8h3.6l.3 5.5H2.9z" fill="#fff"/><ellipse cx="5" cy="10.4" rx="4.7" ry="1.5" fill="#fff" opacity=".85"/></svg>故障分析</div>
<div class="abs bt" style="left:1585px;top:562px;width:72px;background:#23c6c8"><svg width="11" height="11" viewBox="0 0 11 11" style="vertical-align:-1px"><rect width="11" height="11" fill="#fff"/><rect x="1" y="2.5" width="9" height=".8" fill="rgba(0,0,0,.12)"/><rect x="1" y="5" width="9" height=".8" fill="rgba(0,0,0,.08)"/></svg>调度日志</div>
<div class="abs bt" style="left:1662px;top:562px;width:96px;background:#f8ac59"><svg width="12" height="11" viewBox="0 0 12 11" style="vertical-align:-1px"><path d="M7 1.2H1.2v8.6h8.6V5.5" fill="none" stroke="#fff" stroke-width="1.3"/><path d="M4.2 7.6l.4-2.2L9.5.5l1.8 1.8-4.9 4.9z" fill="#fff"/></svg>设备命令配置</div>
<div class="abs bt" style="left:1763px;top:562px;width:72px;background:#1ab394"><svg width="11" height="11" viewBox="0 0 11 11" style="vertical-align:-1px"><rect width="11" height="11" fill="#fff"/><rect x="1" y="2.5" width="9" height=".8" fill="rgba(0,0,0,.12)"/><rect x="1" y="5" width="9" height=".8" fill="rgba(0,0,0,.08)"/></svg>设备信息</div>
<div class="abs" style="left:228px;top:631px;width:1664px;height:1px;background:#e4e4e4"></div>
<div class="abs td" style="left:236px;top:603px">9</div>
<div class="abs td" style="left:545px;top:603px">阀门井</div>
<div class="abs badge" style="left:641px;top:602px;background:#1ab394">在线</div>
<div class="abs badge" style="left:721px;top:602px;background:#1ab394">正常</div>
<div class="abs td" style="left:787px;top:603px">2023-04-10 13:10:03</div>
<div class="abs td" style="left:1033px;top:603px">-</div>
<div class="abs td" style="left:1114px;top:603px">锂电</div>
<div class="abs td" style="left:1194px;top:603px">阀门井</div>
<div class="abs td" style="left:1275px;top:603px">-</div>
<div class="abs bt" style="left:1373px;top:601px;width:48px;background:#1c84c6"><svg width="12" height="11" viewBox="0 0 12 11" style="vertical-align:-1px"><path d="M7 1.2H1.2v8.6h8.6V5.5" fill="none" stroke="#fff" stroke-width="1.3"/><path d="M4.2 7.6l.4-2.2L9.5.5l1.8 1.8-4.9 4.9z" fill="#fff"/></svg>编辑</div>
<div class="abs bt" style="left:1430px;top:601px;width:72px;background:#f8ac59"><svg width="12" height="11" viewBox="0 0 12 11" style="vertical-align:-1px"><path d="M7 1.2H1.2v8.6h8.6V5.5" fill="none" stroke="#fff" stroke-width="1.3"/><path d="M4.2 7.6l.4-2.2L9.5.5l1.8 1.8-4.9 4.9z" fill="#fff"/></svg>设备分析</div>
<div class="abs bt" style="left:1507px;top:601px;width:73px;background:#f8ac59"><svg width="10" height="12" viewBox="0 0 10 12" style="vertical-align:-1px;margin-right:4px"><circle cx="5" cy="1.8" r="1.7" fill="#fff"/><path d="M3.2 3.8h3.6l.3 5.5H2.9z" fill="#fff"/><ellipse cx="5" cy="10.4" rx="4.7" ry="1.5" fill="#fff" opacity=".85"/></svg>故障分析</div>
<div class="abs bt" style="left:1585px;top:601px;width:72px;background:#23c6c8"><svg width="11" height="11" viewBox="0 0 11 11" style="vertical-align:-1px"><rect width="11" height="11" fill="#fff"/><rect x="1" y="2.5" width="9" height=".8" fill="rgba(0,0,0,.12)"/><rect x="1" y="5" width="9" height=".8" fill="rgba(0,0,0,.08)"/></svg>调度日志</div>
<div class="abs bt" style="left:1662px;top:601px;width:96px;background:#f8ac59"><svg width="12" height="11" viewBox="0 0 12 11" style="vertical-align:-1px"><path d="M7 1.2H1.2v8.6h8.6V5.5" fill="none" stroke="#fff" stroke-width="1.3"/><path d="M4.2 7.6l.4-2.2L9.5.5l1.8 1.8-4.9 4.9z" fill="#fff"/></svg>设备命令配置</div>
<div class="abs bt" style="left:1763px;top:601px;width:72px;background:#1ab394"><svg width="11" height="11" viewBox="0 0 11 11" style="vertical-align:-1px"><rect width="11" height="11" fill="#fff"/><rect x="1" y="2.5" width="9" height=".8" fill="rgba(0,0,0,.12)"/><rect x="1" y="5" width="9" height=".8" fill="rgba(0,0,0,.08)"/></svg>设备信息</div>
<div class="abs" style="left:228px;top:670px;width:1664px;height:1px;background:#e4e4e4"></div>
<div class="abs td" style="left:236px;top:642px">10</div>
<div class="abs td" style="left:545px;top:642px">阀门井</div>
<div class="abs badge" style="left:641px;top:641px;background:#1ab394">在线</div>
<div class="abs badge" style="left:721px;top:641px;background:#1ab394">正常</div>
<div class="abs td" style="left:787px;top:642px">2023-04-10 13:10:02</div>
<div class="abs td" style="left:1033px;top:642px">-</div>
<div class="abs td" style="left:1114px;top:642px">锂电</div>
<div class="abs td" style="left:1194px;top:642px">阀门井</div>
<div class="abs td" style="left:1275px;top:642px">-</div>
<div class="abs bt" style="left:1373px;top:640px;width:48px;background:#1c84c6"><svg width="12" height="11" viewBox="0 0 12 11" style="vertical-align:-1px"><path d="M7 1.2H1.2v8.6h8.6V5.5" fill="none" stroke="#fff" stroke-width="1.3"/><path d="M4.2 7.6l.4-2.2L9.5.5l1.8 1.8-4.9 4.9z" fill="#fff"/></svg>编辑</div>
<div class="abs bt" style="left:1430px;top:640px;width:72px;background:#f8ac59"><svg width="12" height="11" viewBox="0 0 12 11" style="vertical-align:-1px"><path d="M7 1.2H1.2v8.6h8.6V5.5" fill="none" stroke="#fff" stroke-width="1.3"/><path d="M4.2 7.6l.4-2.2L9.5.5l1.8 1.8-4.9 4.9z" fill="#fff"/></svg>设备分析</div>
<div class="abs bt" style="left:1507px;top:640px;width:73px;background:#f8ac59"><svg width="10" height="12" viewBox="0 0 10 12" style="vertical-align:-1px;margin-right:4px"><circle cx="5" cy="1.8" r="1.7" fill="#fff"/><path d="M3.2 3.8h3.6l.3 5.5H2.9z" fill="#fff"/><ellipse cx="5" cy="10.4" rx="4.7" ry="1.5" fill="#fff" opacity=".85"/></svg>故障分析</div>
<div class="abs bt" style="left:1585px;top:640px;width:72px;background:#23c6c8"><svg width="11" height="11" viewBox="0 0 11 11" style="vertical-align:-1px"><rect width="11" height="11" fill="#fff"/><rect x="1" y="2.5" width="9" height=".8" fill="rgba(0,0,0,.12)"/><rect x="1" y="5" width="9" height=".8" fill="rgba(0,0,0,.08)"/></svg>调度日志</div>
<div class="abs bt" style="left:1662px;top:640px;width:96px;background:#f8ac59"><svg width="12" height="11" viewBox="0 0 12 11" style="vertical-align:-1px"><path d="M7 1.2H1.2v8.6h8.6V5.5" fill="none" stroke="#fff" stroke-width="1.3"/><path d="M4.2 7.6l.4-2.2L9.5.5l1.8 1.8-4.9 4.9z" fill="#fff"/></svg>设备命令配置</div>
<div class="abs bt" style="left:1763px;top:640px;width:72px;background:#1ab394"><svg width="11" height="11" viewBox="0 0 11 11" style="vertical-align:-1px"><rect width="11" height="11" fill="#fff"/><rect x="1" y="2.5" width="9" height=".8" fill="rgba(0,0,0,.12)"/><rect x="1" y="5" width="9" height=".8" fill="rgba(0,0,0,.08)"/></svg>设备信息</div>
<div class="abs" style="left:272px;top:281px;width:96px;height:388px;background:#fff"></div>
<div class="abs" style="left:397px;top:281px;width:115px;height:388px;background:#fff"></div>
<div class="abs" style="left:950px;top:281px;width:57px;height:388px;background:#fff"></div>
<div class="abs blur" style="left:281px;top:294px;width:84px;height:11px"></div>
<div class="abs blur" style="left:403px;top:294px;width:103px;height:11px"></div>
<div class="abs blur" style="left:954px;top:294px;width:49px;height:11px"></div>
<div class="abs blur" style="left:281px;top:333px;width:84px;height:11px"></div>
<div class="abs blur" style="left:403px;top:333px;width:103px;height:11px"></div>
<div class="abs blur" style="left:954px;top:333px;width:49px;height:11px"></div>
<div class="abs blur" style="left:281px;top:372px;width:84px;height:11px"></div>
<div class="abs blur" style="left:403px;top:372px;width:103px;height:11px"></div>
<div class="abs blur" style="left:954px;top:372px;width:49px;height:11px"></div>
<div class="abs blur" style="left:281px;top:411px;width:84px;height:11px"></div>
<div class="abs blur" style="left:403px;top:411px;width:103px;height:11px"></div>
<div class="abs blur" style="left:954px;top:411px;width:49px;height:11px"></div>
<div class="abs blur" style="left:281px;top:450px;width:84px;height:11px"></div>
<div class="abs blur" style="left:403px;top:450px;width:103px;height:11px"></div>
<div class="abs blur" style="left:954px;top:450px;width:22px;height:11px"></div>
<div class="abs blur" style="left:281px;top:489px;width:84px;height:11px"></div>
<div class="abs blur" style="left:403px;top:489px;width:103px;height:11px"></div>
<div class="abs blur" style="left:954px;top:489px;width:22px;height:11px"></div>
<div class="abs blur" style="left:281px;top:528px;width:84px;height:11px"></div>
<div class="abs blur" style="left:403px;top:528px;width:103px;height:11px"></div>
<div class="abs blur" style="left:954px;top:528px;width:49px;height:11px"></div>
<div class="abs blur" style="left:281px;top:567px;width:84px;height:11px"></div>
<div class="abs blur" style="left:403px;top:567px;width:103px;height:11px"></div>
<div class="abs blur" style="left:954px;top:567px;width:49px;height:11px"></div>
<div class="abs blur" style="left:281px;top:606px;width:84px;height:11px"></div>
<div class="abs blur" style="left:403px;top:606px;width:103px;height:11px"></div>
<div class="abs blur" style="left:954px;top:606px;width:49px;height:11px"></div>
<div class="abs blur" style="left:281px;top:645px;width:84px;height:11px"></div>
<div class="abs blur" style="left:403px;top:645px;width:103px;height:11px"></div>
<div class="abs blur" style="left:954px;top:645px;width:49px;height:11px"></div>
<div class="abs td" style="left:228px;top:689px">显示第 1 到第 10 条记录，总共 166 条记录</div>
<div class="abs td" style="left:484px;top:689px">每页显示</div>
<div class="abs" style="left:540px;top:681px;width:53px;height:34px;border:1px solid #ddd;border-radius:3px;background:#fff"></div>
<div class="abs td" style="left:553px;top:690px;color:#333">10</div>
<svg class="abs" style="left:574px;top:696px" width="8" height="5" viewBox="0 0 8 5"><path d="M0 5L4 1 8 5z" fill="#333"/></svg>
<div class="abs td" style="left:597px;top:689px">条记录</div>
<div class="abs" style="left:1632px;top:681px;width:260px;height:28px;border:1px solid #ddd;border-radius:4px;background:#fff"></div>
<div class="abs" style="left:1658px;top:682px;width:28px;height:26px;background:#f4f4f4"></div>
<div class="abs" style="left:1657px;top:682px;width:1px;height:26px;background:#ddd"></div>
<div class="abs" style="left:1686px;top:682px;width:1px;height:26px;background:#ddd"></div>
<div class="abs" style="left:1714px;top:682px;width:1px;height:26px;background:#ddd"></div>
<div class="abs" style="left:1742px;top:682px;width:1px;height:26px;background:#ddd"></div>
<div class="abs" style="left:1770px;top:682px;width:1px;height:26px;background:#ddd"></div>
<div class="abs" style="left:1798px;top:682px;width:1px;height:26px;background:#ddd"></div>
<div class="abs" style="left:1830px;top:682px;width:1px;height:26px;background:#ddd"></div>
<div class="abs" style="left:1866px;top:682px;width:1px;height:26px;background:#ddd"></div>
<div class="abs pg" style="left:1632px;top:686px;width:25px">&lsaquo;</div>
<div class="abs pg" style="left:1657px;top:686px;width:29px">1</div>
<div class="abs pg" style="left:1686px;top:686px;width:28px">2</div>
<div class="abs pg" style="left:1714px;top:686px;width:28px">3</div>
<div class="abs pg" style="left:1742px;top:686px;width:28px">4</div>
<div class="abs pg" style="left:1770px;top:686px;width:28px">5</div>
<div class="abs pg" style="left:1798px;top:686px;width:32px">...</div>
<div class="abs pg" style="left:1830px;top:686px;width:36px">17</div>
<div class="abs pg" style="left:1866px;top:686px;width:25px">&rsaquo;</div>
<div class="abs" id="copy" style="left:1760px;top:909px;font-size:13px;color:#676a6c;line-height:16px;white-space:nowrap">&copy; 2021 RuoYi Copyright</div>
</body></html>
